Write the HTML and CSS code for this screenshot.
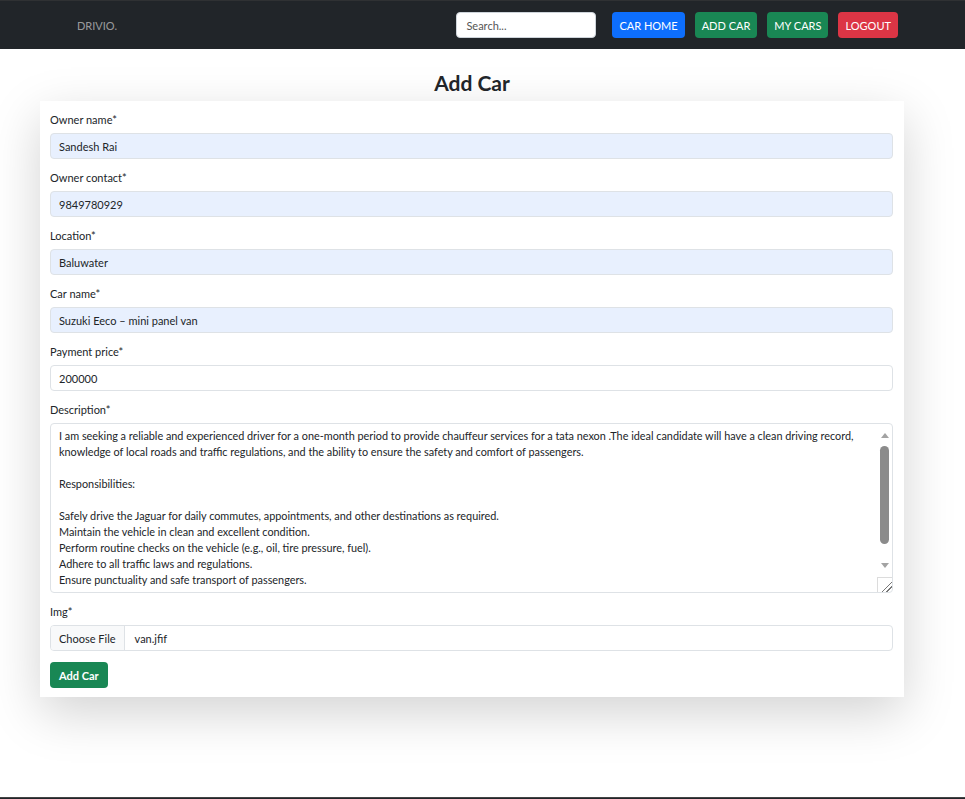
FILE: index.html
```html
<!DOCTYPE html>
<html lang="en">
<head>
<meta charset="utf-8">
<title>Add Car - DRIVIO.</title>
<link rel="stylesheet" href="styles.css">
</head>
<body>
<nav class="navbar">
  <a class="brand" href="#">DRIVIO.</a>
  <div class="nav-right">
    <input class="search" type="text" placeholder="Search...">
    <div class="nav-buttons">
      <a class="btn btn-blue nav-btn" href="#">CAR HOME</a>
      <a class="btn btn-green nav-btn" href="#">ADD CAR</a>
      <a class="btn btn-green nav-btn" href="#">MY CARS</a>
      <a class="btn btn-red nav-btn" href="#">LOGOUT</a>
    </div>
  </div>
</nav>
<main class="main">
  <h2 class="title">Add Car</h2>
  <form class="card">
    <div class="field">
      <label class="label">Owner name*</label>
      <input class="control autofill" type="text" value="Sandesh Rai">
    </div>
    <div class="field">
      <label class="label">Owner contact*</label>
      <input class="control autofill" type="text" value="9849780929">
    </div>
    <div class="field">
      <label class="label">Location*</label>
      <input class="control autofill" type="text" value="Baluwater">
    </div>
    <div class="field">
      <label class="label">Car name*</label>
      <input class="control autofill" type="text" value="Suzuki Eeco – mini panel van">
    </div>
    <div class="field">
      <label class="label">Payment price*</label>
      <input class="control" type="text" value="200000">
    </div>
    <div class="field">
      <label class="label">Description*</label>
      <div class="textarea-wrap">
        <textarea class="control textarea">I am seeking a reliable and experienced driver for a one-month period to provide chauffeur services for a tata nexon .The ideal candidate will have a clean driving record,
knowledge of local roads and traffic regulations, and the ability to ensure the safety and comfort of passengers.

Responsibilities:

Safely drive the Jaguar for daily commutes, appointments, and other destinations as required.
Maintain the vehicle in clean and excellent condition.
Perform routine checks on the vehicle (e.g., oil, tire pressure, fuel).
Adhere to all traffic laws and regulations.
Ensure punctuality and safe transport of passengers.

Requirements:

Valid driver's license with a clean driving record.
Minimum of 3 years of professional driving experience.</textarea>
        <div class="scrollbar" aria-hidden="true">
          <span class="arrow arrow-up"></span>
          <span class="track"><span class="thumb"></span></span>
          <span class="arrow arrow-down"></span>
        </div>
        <span class="corner" aria-hidden="true"></span>
      </div>
    </div>
    <div class="field">
      <label class="label">Img*</label>
      <div class="control file">
        <span class="file-btn">Choose File</span>
        <span class="file-name">van.jfif</span>
      </div>
    </div>
    <button class="btn btn-green submit" type="button">Add Car</button>
  </form>
</main>
<footer class="footer"></footer>
</body>
</html>
```
FILE: styles.css
```css
* { box-sizing: border-box; }
html, body { margin: 0; padding: 0; }
body {
  font-family: "Lato", "Noto Sans", sans-serif;
  font-size: 11px;
  color: #212529;
  background: #fff;
}
.navbar {
  height: 49px;
  background: #212529;
  border-top: 1px solid #2f3133;
  display: flex;
  align-items: center;
  justify-content: space-between;
  padding: 0 67px 0 77px;
}
.brand {
  color: rgba(255,255,255,.55);
  text-decoration: none;
  font-size: 11px;
}
.nav-right {
  display: flex;
  align-items: center;
  gap: 16px;
}
.search {
  width: 140px;
  height: 26px;
  border: 1px solid #ced4da;
  border-radius: 4px;
  padding: 0 9px;
  font-family: inherit;
  font-size: 11px;
  background: #fff;
}
.search::placeholder { color: #555; }
.nav-buttons {
  display: flex;
  gap: 10px;
}
.btn {
  display: inline-flex;
  align-items: center;
  justify-content: center;
  height: 26px;
  padding: 0 9px;
  border: none;
  border-radius: 4px;
  color: #fff;
  text-decoration: none;
  font-family: inherit;
  font-size: 11px;
  white-space: nowrap;
}
.nav-btn {
  font-size: 11px;
  padding: 0 7px;
}
.btn-blue { background: #0d6efd; }
.btn-green { background: #198754; }
.btn-red { background: #dc3545; }
.main {
  min-height: 748px;
  padding: 20px 61px 0 40px;
}
.title {
  margin: 0;
  text-align: center;
  font-size: 21px;
  font-weight: 700;
  line-height: 28px;
  color: #212529;
}
.card {
  margin-top: 4px;
  background: #fff;
  box-shadow: 0 16px 48px rgba(0,0,0,.175);
  padding: 11px 11px 9px 10px;
  display: flex;
  flex-direction: column;
}
.field {
  display: flex;
  flex-direction: column;
  margin-bottom: 11px;
}
.label {
  line-height: 16px;
  margin-bottom: 5px;
}
.control {
  width: 100%;
  height: 26px;
  border: 1px solid #dee2e6;
  border-radius: 4px;
  padding: 0 8px;
  font-family: inherit;
  font-size: 11px;
  color: #212529;
  background: #fff;
}
.autofill { background: #e8f0fe; }
.textarea-wrap {
  position: relative;
}
.textarea {
  display: block;
  height: 170px;
  padding: 4px 22px 4px 8px;
  font-size: 10.85px;
  line-height: 16px;
  resize: none;
  overflow: hidden;
  white-space: pre-wrap;
}
.scrollbar {
  position: absolute;
  top: 6px;
  right: 2px;
  width: 13px;
  height: 143px;
  display: flex;
  flex-direction: column;
  align-items: center;
}
.arrow {
  width: 0;
  height: 0;
  border-left: 4px solid transparent;
  border-right: 4px solid transparent;
  margin: 4px 0;
}
.arrow-up { border-bottom: 5px solid #a3a3a3; }
.arrow-down { border-top: 5px solid #a3a3a3; }
.track {
  flex: 1;
  width: 100%;
  display: flex;
  justify-content: center;
  padding-top: 4px;
}
.thumb {
  width: 9px;
  height: 98px;
  background: #8b8b8b;
  border-radius: 5px;
}
.corner {
  position: absolute;
  right: 1px;
  bottom: 1px;
  width: 15px;
  height: 15px;
  border-left: 1px solid #dcdcdc;
  border-top: 1px solid #dcdcdc;
  background:
    linear-gradient(135deg, transparent 62%, #777 62%, #777 67%, transparent 67%, transparent 78%, #777 78%, #777 83%, transparent 83%);
}
.file {
  display: flex;
  align-items: stretch;
  padding: 0;
  overflow: hidden;
}
.file-btn {
  display: flex;
  align-items: center;
  padding: 0 8px;
  background: #f8f9fa;
  border-right: 1px solid #dee2e6;
}
.file-name {
  display: flex;
  align-items: center;
  padding: 0 10px;
}
.submit {
  align-self: flex-start;
  padding: 0 9px;
  font-size: 11px;
  font-weight: 700;
}
.footer {
  height: 40px;
  background: #212529;
  border-top: 1px solid #444;
}
```
